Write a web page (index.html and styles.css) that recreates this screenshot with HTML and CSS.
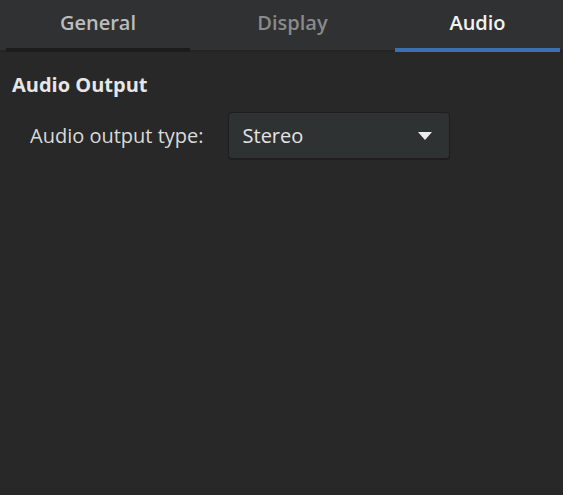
FILE: index.html
```html
<!DOCTYPE html>
<html>
<head>
<meta charset="utf-8">
<link rel="stylesheet" href="styles.css">
</head>
<body>
<div class="window">
  <div class="tabs">
    <div class="tab tab-general">General</div>
    <div class="tab tab-display">Display</div>
    <div class="tab tab-audio">Audio</div>
  </div>
  <div class="content">
    <div class="heading">Audio Output</div>
    <div class="row">
      <div class="label">Audio output type:</div>
      <div class="combo">
        <span class="combo-text">Stereo</span>
        <svg class="arrow" width="14" height="8" viewBox="0 0 14 8"><path d="M0 0 H14 L7 8 Z" fill="#ececec"/></svg>
      </div>
    </div>
  </div>
</div>
</body>
</html>
```
FILE: styles.css
```css
html, body {
  margin: 0;
  padding: 0;
  background: #282828;
}
body {
  font-family: "Open Sans", "Noto Sans", sans-serif;
  width: 563px;
  height: 495px;
  overflow: hidden;
}
.window {
  width: 563px;
  height: 495px;
  background: #282828;
}
.tabs {
  display: flex;
  height: 52px;
  padding-left: 6px;
  background: #303132;
  box-shadow: inset 0 -2px 0 #242424;
  box-sizing: border-box;
}
.tab {
  box-sizing: border-box;
  height: 52px;
  padding-top: 11px;
  line-height: 24px;
  font-size: 20px;
  font-weight: 600;
  text-align: center;
  border-bottom: 4px solid transparent;
}
.tab-general {
  width: 184px;
  color: #bcbcbc;
  border-bottom-color: #1c1c1c;
}
.tab-display {
  width: 205px;
  color: #8a8a8a;
}
.tab-audio {
  width: 165px;
  color: #f2f2f2;
  border-bottom-color: #3a6fb4;
}
.content {
  padding: 21px 12px 0 12px;
}
.heading {
  font-size: 20px;
  line-height: 24px;
  font-weight: 700;
  color: #e6e6e6;
}
.row {
  display: flex;
  align-items: center;
  margin-top: 15px;
  padding-left: 18px;
  gap: 24px;
}
.label {
  font-size: 20px;
  line-height: 24px;
  color: #dadada;
}
.combo {
  box-sizing: border-box;
  width: 222px;
  height: 47px;
  display: flex;
  align-items: center;
  justify-content: space-between;
  padding: 0 17px 0 14px;
  background: #2f3233;
  border: 1px solid #1e1e1e;
  border-radius: 4px;
  box-shadow: 0 1px 1px rgba(0,0,0,0.25);
}
.combo-text {
  font-size: 20px;
  line-height: 24px;
  color: #e4e4e4;
}
.arrow {
  display: block;
}
```
